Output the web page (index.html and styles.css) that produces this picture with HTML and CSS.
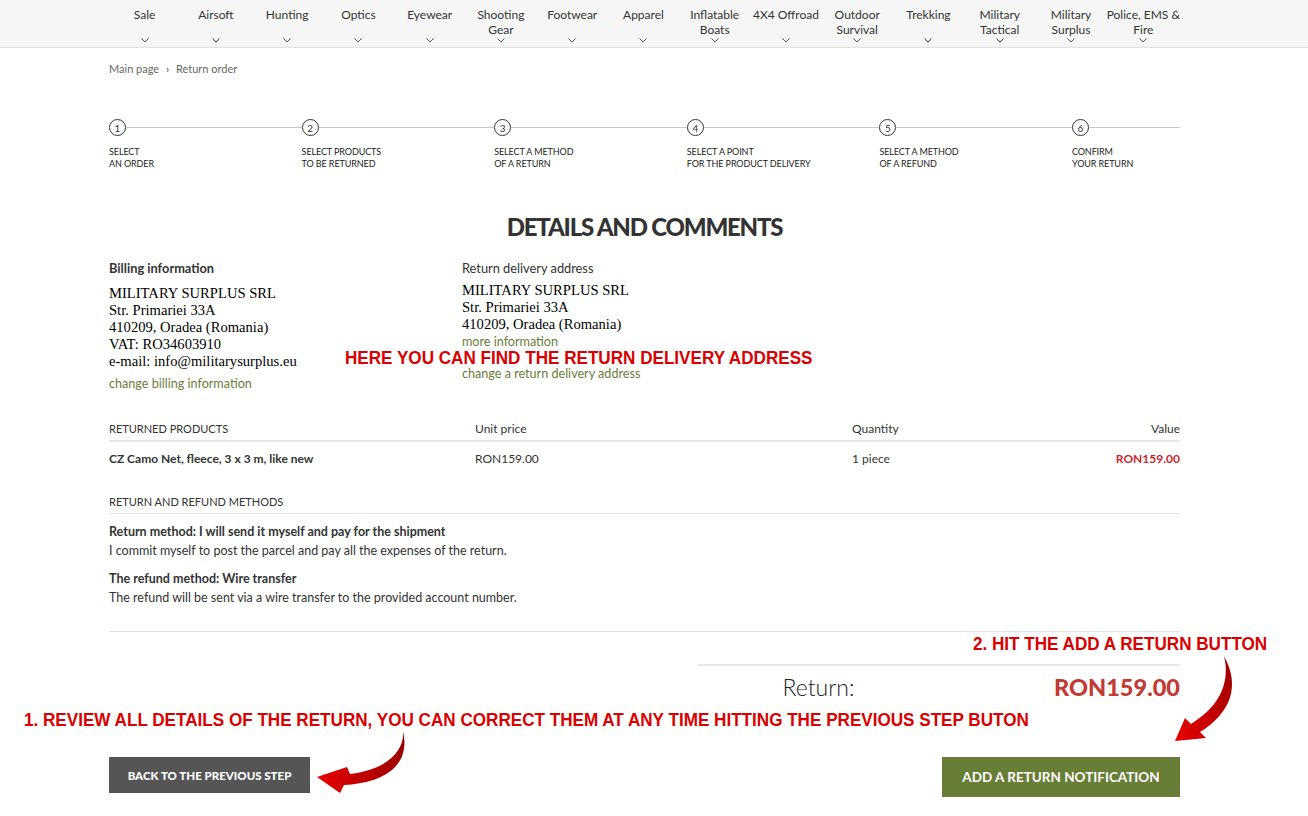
FILE: index.html
```html
<!DOCTYPE html>
<html lang="en">
<head>
  <meta charset="UTF-8">
  <title>Return order</title>
  <link rel="stylesheet" href="styles.css">
</head>
<body>
  <div class="topnav">
    <div class="container nav-grid">
      <div class="nav-item"><span>Sale</span><svg width="8" height="5" viewBox="0 0 8 5"><path d="M0.5 0.5 L4 4 L7.5 0.5" fill="none" stroke="#555"/></svg></div>
      <div class="nav-item"><span>Airsoft</span><svg width="8" height="5" viewBox="0 0 8 5"><path d="M0.5 0.5 L4 4 L7.5 0.5" fill="none" stroke="#555"/></svg></div>
      <div class="nav-item"><span>Hunting</span><svg width="8" height="5" viewBox="0 0 8 5"><path d="M0.5 0.5 L4 4 L7.5 0.5" fill="none" stroke="#555"/></svg></div>
      <div class="nav-item"><span>Optics</span><svg width="8" height="5" viewBox="0 0 8 5"><path d="M0.5 0.5 L4 4 L7.5 0.5" fill="none" stroke="#555"/></svg></div>
      <div class="nav-item"><span>Eyewear</span><svg width="8" height="5" viewBox="0 0 8 5"><path d="M0.5 0.5 L4 4 L7.5 0.5" fill="none" stroke="#555"/></svg></div>
      <div class="nav-item"><span>Shooting<br>Gear</span><svg width="8" height="5" viewBox="0 0 8 5"><path d="M0.5 0.5 L4 4 L7.5 0.5" fill="none" stroke="#555"/></svg></div>
      <div class="nav-item"><span>Footwear</span><svg width="8" height="5" viewBox="0 0 8 5"><path d="M0.5 0.5 L4 4 L7.5 0.5" fill="none" stroke="#555"/></svg></div>
      <div class="nav-item"><span>Apparel</span><svg width="8" height="5" viewBox="0 0 8 5"><path d="M0.5 0.5 L4 4 L7.5 0.5" fill="none" stroke="#555"/></svg></div>
      <div class="nav-item"><span>Inflatable<br>Boats</span><svg width="8" height="5" viewBox="0 0 8 5"><path d="M0.5 0.5 L4 4 L7.5 0.5" fill="none" stroke="#555"/></svg></div>
      <div class="nav-item"><span>4X4 Offroad</span><svg width="8" height="5" viewBox="0 0 8 5"><path d="M0.5 0.5 L4 4 L7.5 0.5" fill="none" stroke="#555"/></svg></div>
      <div class="nav-item"><span>Outdoor<br>Survival</span><svg width="8" height="5" viewBox="0 0 8 5"><path d="M0.5 0.5 L4 4 L7.5 0.5" fill="none" stroke="#555"/></svg></div>
      <div class="nav-item"><span>Trekking</span><svg width="8" height="5" viewBox="0 0 8 5"><path d="M0.5 0.5 L4 4 L7.5 0.5" fill="none" stroke="#555"/></svg></div>
      <div class="nav-item"><span>Military<br>Tactical</span><svg width="8" height="5" viewBox="0 0 8 5"><path d="M0.5 0.5 L4 4 L7.5 0.5" fill="none" stroke="#555"/></svg></div>
      <div class="nav-item"><span>Military<br>Surplus</span><svg width="8" height="5" viewBox="0 0 8 5"><path d="M0.5 0.5 L4 4 L7.5 0.5" fill="none" stroke="#555"/></svg></div>
      <div class="nav-item"><span>Police, EMS &amp;<br>Fire</span><svg width="8" height="5" viewBox="0 0 8 5"><path d="M0.5 0.5 L4 4 L7.5 0.5" fill="none" stroke="#555"/></svg></div>
    </div>
  </div>

  <div class="page">
    <div class="container">
      <div class="crumbs">Main page <span class="sep">&rsaquo;</span> Return order</div>

      <div class="steps">
        <div class="step"><div class="step-head"><span class="step-num">1</span></div><div class="step-label">Select<br>an order</div></div>
        <div class="step"><div class="step-head"><span class="step-num">2</span></div><div class="step-label">Select products<br>to be returned</div></div>
        <div class="step"><div class="step-head"><span class="step-num">3</span></div><div class="step-label">Select a method<br>of a return</div></div>
        <div class="step"><div class="step-head"><span class="step-num">4</span></div><div class="step-label">Select a point<br>for the product delivery</div></div>
        <div class="step"><div class="step-head"><span class="step-num">5</span></div><div class="step-label">Select a method<br>of a refund</div></div>
        <div class="step"><div class="step-head"><span class="step-num">6</span></div><div class="step-label">Confirm<br>your return</div></div>
      </div>

      <h1 class="title">DETAILS AND COMMENTS</h1>

      <div class="addresses">
        <div class="addr billing">
          <div class="addr-label">Billing information</div>
          <div class="addr-text">MILITARY SURPLUS SRL<br>Str. Primariei 33A<br>410209, Oradea (Romania)<br>VAT: RO34603910<br>e-mail: info@militarysurplus.eu</div>
          <a class="link change-billing" href="#">change billing information</a>
        </div>
        <div class="addr delivery">
          <div class="addr-label normal">Return delivery address</div>
          <div class="addr-text">MILITARY SURPLUS SRL<br>Str. Primariei 33A<br>410209, Oradea (Romania)</div>
          <a class="link" href="#">more information</a>
          <a class="link change-delivery" href="#">change a return delivery address</a>
        </div>
      </div>

      <div class="products">
        <div class="prow head">
          <span class="upper">Returned products</span>
          <span>Unit price</span>
          <span>Quantity</span>
          <span class="right">Value</span>
        </div>
        <div class="prow">
          <span class="pname">CZ Camo Net, fleece, 3 x 3 m, like new</span>
          <span>RON159.00</span>
          <span>1 piece</span>
          <span class="right price">RON159.00</span>
        </div>
      </div>

      <div class="methods">
        <div class="methods-head upper">Return and refund methods</div>
        <div class="method">
          <div class="method-name">Return method: I will send it myself and pay for the shipment</div>
          <div>I commit myself to post the parcel and pay all the expenses of the return.</div>
        </div>
        <div class="method">
          <div class="method-name">The refund method: Wire transfer</div>
          <div>The refund will be sent via a wire transfer to the provided account number.</div>
        </div>
      </div>

      <div class="summary">
        <div class="summary-box">
          <span class="sum-label">Return:</span>
          <span class="sum-value">RON159.00</span>
        </div>
      </div>

      <div class="actions">
        <a class="btn btn-back" href="#">BACK TO THE PREVIOUS STEP</a>
        <a class="btn btn-add" href="#">ADD A RETURN NOTIFICATION</a>
      </div>
    </div>
  </div>

  <!-- annotations drawn over the screenshot -->
  <div class="note note-address">HERE YOU CAN FIND THE RETURN DELIVERY ADDRESS</div>
  <div class="note note-button">2. HIT THE ADD A RETURN BUTTON</div>
  <div class="note note-review">1. REVIEW ALL DETAILS OF THE RETURN, YOU CAN CORRECT THEM AT ANY TIME HITTING THE PREVIOUS STEP BUTON</div>
  <svg class="arrows" width="1308" height="816" viewBox="0 0 1308 816">
    <defs>
      <linearGradient id="red1" x1="0" y1="0" x2="1" y2="0">
        <stop offset="0" stop-color="#e80000"/>
        <stop offset="1" stop-color="#9a0000"/>
      </linearGradient>
      <linearGradient id="red2" x1="0" y1="1" x2="1" y2="0">
        <stop offset="0" stop-color="#e80000"/>
        <stop offset="1" stop-color="#9a0000"/>
      </linearGradient>
    </defs>
    <path d="M403 731 C405 752 385 770 350 774 L347 767 L317 777 L340 793 L344 785 C385 783 411 765 403 731 Z" fill="url(#red1)"/>
    <path d="M1224 656 C1230 680 1222 705 1191 724 L1185 718 L1175 741 L1206 738 L1200 732 C1232 712 1240 685 1224 656 Z" fill="url(#red2)"/>
  </svg>
</body>
</html>
```

FILE: styles.css
```css
body {
  margin: 0;
  position: relative;
  font-family: Lato, "Noto Sans", sans-serif;
  color: #333;
  background: #fff;
}
a {
  text-decoration: none;
}
.container {
  width: 1071px;
  margin-left: 109px;
}
.topnav {
  height: 47px;
  background: #f6f6f6;
  border-bottom: 1px solid #e3e3e3;
}
.nav-grid {
  display: grid;
  grid-template-columns: repeat(15, 1fr);
  height: 100%;
}
.nav-item {
  display: flex;
  flex-direction: column;
  align-items: center;
  text-align: center;
  font-size: 12px;
  line-height: 15px;
  padding-top: 7px;
  white-space: nowrap;
  color: #333;
}
.nav-item svg {
  margin-top: auto;
  margin-bottom: 4px;
}
.crumbs {
  padding-top: 14px;
  font-size: 11px;
  line-height: 14px;
  color: #666;
}
.crumbs .sep {
  margin: 0 4px;
  color: #444;
}

/* steps */
.steps {
  display: flex;
  margin-top: 43px;
}
.step {
  width: 192.6px;
  flex: none;
}
.step:last-child {
  flex: 1;
}
.step-head {
  display: flex;
  align-items: center;
}
.step-head::after {
  content: "";
  flex: 1;
  height: 1px;
  background: #c8c8c8;
}
.step-num {
  width: 17px;
  height: 17px;
  box-sizing: border-box;
  border: 1px solid #333;
  border-radius: 50%;
  display: flex;
  align-items: center;
  justify-content: center;
  font-size: 10px;
}
.step-label {
  margin-top: 10px;
  font-size: 9px;
  line-height: 12px;
  text-transform: uppercase;
  letter-spacing: -0.1px;
  color: #222;
}

.title {
  margin: 42px 0 0;
  font-size: 24px;
  line-height: 30px;
  font-weight: 900;
  letter-spacing: -1.2px;
  text-align: center;
  color: #333;
}

/* addresses */
.addresses {
  display: grid;
  grid-template-columns: 353px 1fr;
  margin-top: 18px;
}
.addr-label {
  font-size: 12.8px;
  line-height: 16px;
  font-weight: 700;
  color: #333;
}
.addr-label.normal {
  font-weight: 400;
}
.addr-text {
  margin-top: 9px;
  font-family: "Liberation Serif", serif;
  font-size: 14.6px;
  line-height: 17px;
  color: #000;
}
.delivery .addr-text {
  margin-top: 6px;
}
.link {
  display: block;
  font-size: 12.6px;
  line-height: 16px;
  color: #6b7d3a;
}
.delivery .link {
  margin-top: 1px;
}
.change-billing {
  margin-top: 6px;
}
.delivery .change-delivery {
  margin-top: 16px;
}

/* products */
.upper {
  text-transform: uppercase;
}
.products {
  margin-top: 29px;
  font-size: 12px;
}
.prow {
  display: grid;
  grid-template-columns: 366px 377px 1fr auto;
  line-height: 15px;
}
.prow.head {
  padding-bottom: 4px;
  border-bottom: 2px solid #e6e6e6;
}
.prow.head .upper {
  font-size: 11px;
}
.prow:not(.head) {
  padding-top: 9px;
}
.prow .right {
  text-align: right;
}
.pname {
  font-weight: 700;
}
.price {
  font-weight: 700;
  color: #c8282e;
}

/* methods */
.methods {
  margin-top: 28px;
  font-size: 12.5px;
  line-height: 15px;
  padding-bottom: 26px;
  border-bottom: 1px solid #e3e3e3;
}
.methods-head {
  font-size: 11px;
  padding-bottom: 4px;
  border-bottom: 1px solid #e3e3e3;
}
.method {
  margin-top: 10px;
}
.method + .method {
  margin-top: 13px;
}
.method-name {
  font-weight: 700;
  margin-bottom: 4px;
}

/* summary */
.summary {
  display: flex;
  justify-content: flex-end;
  margin-top: 32px;
}
.summary-box {
  width: 482px;
  border-top: 2px solid #e6e6e6;
  display: grid;
  grid-template-columns: 1fr 1fr;
  align-items: center;
  padding-top: 7px;
}
.sum-label {
  text-align: center;
  font-size: 23px;
  font-weight: 300;
  color: #222;
}
.sum-value {
  text-align: right;
  font-size: 23.5px;
  font-weight: 900;
  color: #c23a33;
}

/* buttons */
.actions {
  display: flex;
  justify-content: space-between;
  align-items: flex-start;
  margin-top: 56px;
}
.btn {
  display: flex;
  align-items: center;
  justify-content: center;
  color: #fff;
  font-weight: 700;
}
.btn-back {
  width: 201px;
  height: 36px;
  background: #555;
  font-size: 11.5px;
  font-weight: 900;
}
.btn-add {
  width: 238px;
  height: 40px;
  background: #687d36;
  font-size: 13.5px;
}

/* annotations */
.note {
  position: absolute;
  font-family: "Liberation Sans", Arial, sans-serif;
  font-size: 19px;
  line-height: 22px;
  font-weight: 700;
  color: #d80000;
  white-space: nowrap;
  transform-origin: left center;
  transform: scaleX(0.9);
}
.note-address {
  left: 345px;
  top: 347px;
}
.note-button {
  left: 973px;
  top: 633px;
}
.note-review {
  left: 24px;
  top: 709px;
}
.arrows {
  position: absolute;
  left: 0;
  top: 0;
  pointer-events: none;
}
```
